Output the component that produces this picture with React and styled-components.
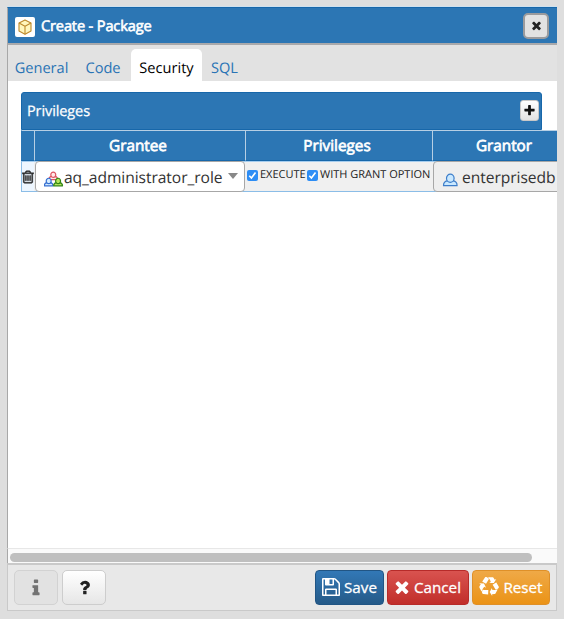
import React from 'react';
import styled, { createGlobalStyle } from 'styled-components';

const GlobalStyle = createGlobalStyle`
  * { box-sizing: border-box; }
  html, body { margin: 0; padding: 0; background: #dedede; overflow: hidden; }
  body { font-family: "Open Sans", "Noto Sans", sans-serif; color: #222; text-rendering: geometricPrecision; }
  svg { display: block; flex: none; }
`;

const Page = styled.div`
  width: 564px;
  height: 619px;
  padding: 6px 7px 8px 7px;
  background: #dedede;
`;
const Dialog = styled.div`
  width: 550px;
  height: 605px;
  display: flex;
  flex-direction: column;
  border-top: 1px solid #d0e1ee;
`;
const TitleBar = styled.header`
  height: 38px;
  flex: none;
  display: flex;
  align-items: center;
  padding: 0 8px 0 7px;
  background: #2c76b4;
  border-top: 1px solid #1767aa;
  border-left: 1px solid #a8a8a8;
  border-bottom: 2px solid #a9a9ab;
`;
const PackageBadge = styled.span`
  width: 20px;
  height: 20px;
  margin-top: 3px;
  display: flex;
  align-items: center;
  justify-content: center;
  background: #fff;
  border-radius: 2px;
`;
const Title = styled.h1`
  margin: 0 auto 0 6px;
  color: #fff;
  font-size: 14.6px;
  font-weight: 400;
  letter-spacing: -0.15px;
  -webkit-text-stroke: 0.6px #fff;
  line-height: 22px;
  white-space: nowrap;
`;
const CloseButton = styled.button`
  width: 26px;
  height: 26px;
  padding: 0;
  display: flex;
  align-items: center;
  justify-content: center;
  color: #222;
  background: #e2e2e2;
  border: 2px solid #9b9b9d;
  border-radius: 5px;
`;
const Tabs = styled.nav`
  height: 36px;
  flex: none;
  display: flex;
  align-items: flex-end;
  background: #e2e2e2;
  border-left: 1px solid #a8a8a8;
`;
const Tab = styled.a`
  width: ${p => p.$w}px;
  height: 32px;
  padding-top: 7px;
  text-align: center;
  font-size: 14.6px;
  line-height: 24px;
  color: ${p => (p.$active ? '#000' : '#2a74b5')};
  background: ${p => (p.$active ? '#fff' : 'transparent')};
  border-radius: 5px 5px 0 0;
`;
const Body = styled.main`
  flex: 1;
  padding: 11px 0 0 13px;
  background: #fff;
  border-left: 1px solid #a8a8a8;
  overflow: hidden;
`;
const PanelHeader = styled.div`
  width: 521px;
  height: 38px;
  padding: 1px 2px 0 5px;
  display: flex;
  align-items: center;
  justify-content: space-between;
  color: #fff;
  background: #2c76b4;
  border: 1px solid #1767aa;
  border-radius: 3px 3px 0 0;
  font-size: 14.5px;
  letter-spacing: -0.1px;
  -webkit-text-stroke: 0.25px #fff;
  line-height: 20px;
`;
const AddButton = styled.button`
  width: 19px;
  height: 21px;
  margin-bottom: 3px;
  padding: 0;
  display: flex;
  align-items: center;
  justify-content: center;
  color: #111;
  background: linear-gradient(#fff, #e2e2e2);
  border: 1px solid #c8c8c8;
  border-radius: 3px;
`;
const Grid = styled.div`
  width: 574px;
  display: grid;
  grid-template-columns: 13px 211px 187px 163px;
`;
const HeadCell = styled.div`
  height: 31px;
  padding: ${p => p.$pad || '5px 0 0'};
  text-align: center;
  color: #fff;
  background: #2c76b4;
  border-top: 1px solid #b7cfe4;
  border-left: 1px solid ${p => (p.$first ? '#2c76b4' : '#b7cfe4')};
  border-bottom: 1px solid #1767aa;
  font-size: 15.3px;
  -webkit-text-stroke: 0.7px #fff;
  line-height: 21px;
`;
const Cell = styled.div`
  height: 31px;
  display: flex;
  align-items: center;
  background: ${p => p.$bg || '#f0f0f0'};
  border-top: 1px solid #a6cdee;
  border-bottom: 1px solid #8bbde7;
  border-left: ${p => (p.$first ? '1px solid #8bbde7' : '0')};
`;
const SelectBox = styled.div`
  width: ${p => p.$w}px;
  height: 31px;
  margin: -1px 0 -1px 1px;
  padding: 2px 6px 0 8px;
  display: flex;
  align-items: center;
  background: ${p => p.$bg};
  border: 1px solid #a7a7a7;
  border-radius: 4px;
  font-size: 15.6px;
  line-height: 24px;
  color: #333;
  white-space: nowrap;
  svg { margin-top: 3px; }
`;
const SelectText = styled.span`
  margin: 0 auto 1px ${p => p.$gap || 0}px;
  letter-spacing: -0.06px;
`;
const Caret = styled.span`
  border: 5px solid transparent;
  border-top: 6px solid #888;
  border-bottom: 0;
  margin-bottom: 3px;
`;
const CheckLabel = styled.span`
  width: ${p => p.$w}px;
  height: 20px;
  margin-bottom: 4px;
  display: flex;
  align-items: center;
  gap: 2px;
  font-size: 11px;
  color: #222;
  white-space: nowrap;
`;
const CheckMark = styled.span`
  width: 11px;
  height: 11px;
  margin-top: 1px;
  flex: none;
  display: flex;
  align-items: center;
  justify-content: center;
  background: #2d8df5;
  border-radius: 2px;
`;
const CheckCell = styled(Cell)`
  padding-left: 2px;
`;
const ScrollTrack = styled.div`
  height: 15px;
  flex: none;
  padding: 4px 0 0 2px;
  background: #fafafa;
  border-top: 1px solid #e7e7e7;
  border-left: 1px solid #a8a8a8;
`;
const ScrollThumb = styled.div`
  width: 522px;
  height: 9px;
  background: #bfbfbf;
  border-radius: 5px;
`;
const Footer = styled.footer`
  width: 550px;
  height: 48px;
  flex: none;
  padding: 0 6px 0 6px;
  display: flex;
  align-items: center;
  gap: 3px;
  background: #e8e8e8;
  border: 1px solid #c9c9c9;
  border-top-width: 2px;
`;
const IconButton = styled.button`
  width: 44px;
  height: 35px;
  padding: 0;
  margin-right: ${p => (p.$last ? 'auto' : '0')};
  display: flex;
  align-items: center;
  justify-content: center;
  color: ${p => (p.$disabled ? '#737373' : '#222')};
  background: ${p => (p.$disabled ? '#e2e2e2' : 'linear-gradient(#fff, #e6e6e6)')};
  border: 1px solid ${p => (p.$disabled ? '#d2d2d2' : '#cdcdcd')};
  border-radius: 5px;
`;
const FirstIconButton = styled(IconButton)`
  margin-right: 1px;
`;
const tones = {
  save: ['#3278b6', '#255a88', '#215584'],
  cancel: ['#d9534f', '#c12e2a', '#b72b29'],
  reset: ['#efa947', '#eb9316', '#df9028'],
};
const ActionButton = styled.button`
  width: ${p => p.$w}px;
  height: 35px;
  padding: 0 0 1px;
  display: flex;
  align-items: center;
  justify-content: center;
  gap: ${p => p.$gap}px;
  color: #fff;
  background: linear-gradient(${p => tones[p.$tone][0]}, ${p => tones[p.$tone][1]});
  border: 1px solid ${p => tones[p.$tone][2]};
  border-radius: 4px;
  font: 400 15.2px/22px "Open Sans", "Noto Sans", sans-serif;
  -webkit-text-stroke: 0.3px #fff;
`;

const glyphs = {
  times: 'M1490 1322q0 40-28 68l-136 136q-28 28-68 28t-68-28l-294-294-294 294q-28 28-68 28t-68-28l-136-136q-28-28-28-68t28-68l294-294-294-294q-28-28-28-68t28-68l136-136q28-28 68-28t68 28l294 294 294-294q28-28 68-28t68 28l136 136q28 28 28 68t-28 68l-294 294 294 294q28 28 28 68z',
  plus: 'M1600 736v192q0 40-28 68t-68 28h-416v416q0 40-28 68t-68 28h-192q-40 0-68-28t-28-68v-416h-416q-40 0-68-28t-28-68v-192q0-40 28-68t68-28h416v-416q0-40 28-68t68-28h192q40 0 68 28t28 68v416h416q40 0 68 28t28 68z',
  trash: 'M704 736v576q0 14-9 23t-23 9h-64q-14 0-23-9t-9-23v-576q0-14 9-23t23-9h64q14 0 23 9t9 23zm256 0v576q0 14-9 23t-23 9h-64q-14 0-23-9t-9-23v-576q0-14 9-23t23-9h64q14 0 23 9t9 23zm256 0v576q0 14-9 23t-23 9h-64q-14 0-23-9t-9-23v-576q0-14 9-23t23-9h64q14 0 23 9t9 23zm128 724v-948h-896v948q0 22 7 40.5t14.5 27 10.5 8.5h832q3 0 10.5-8.5t14.5-27 7-40.5zm-672-1076h448l-48-117q-7-9-17-11h-317q-10 2-17 11zm928 32v64q0 14-9 23t-23 9h-96v948q0 83-47 143.5t-113 60.5h-832q-66 0-113-58.5t-47-141.5v-952h-96q-14 0-23-9t-9-23v-64q0-14 9-23t23-9h309l70-167q15-37 54-63t79-26h320q40 0 79 26t54 63l70 167h309q14 0 23 9t9 23z',
  save: 'M512 1536h768v-384h-768v384zm896 0h128v-896q0-14-10-38.5t-20-34.5l-281-281q-10-10-34-20t-39-10v416q0 40-28 68t-68 28h-576q-40 0-68-28t-28-68v-416h-128v1280h128v-416q0-40 28-68t68-28h832q40 0 68 28t28 68v416zm-384-928v-320q0-13-9.5-22.5t-22.5-9.5h-192q-13 0-22.5 9.5t-9.5 22.5v320q0 13 9.5 22.5t22.5 9.5h192q13 0 22.5-9.5t9.5-22.5zm640 32v928q0 40-28 68t-68 28h-1344q-40 0-68-28t-28-68v-1344q0-40 28-68t68-28h928q40 0 88 20t76 48l280 280q28 28 48 76t20 88z',
  info: 'M1216 1344v128q0 26-19 45t-45 19h-512q-26 0-45-19t-19-45v-128q0-26 19-45t45-19h64v-384h-64q-26 0-45-19t-19-45v-128q0-26 19-45t45-19h384q26 0 45 19t19 45v576h64q26 0 45 19t19 45zm-128-1152v192q0 26-19 45t-45 19h-256q-26 0-45-19t-19-45v-192q0-26 19-45t45-19h256q26 0 45 19t19 45z',
  question: 'M1088 1256v240q0 16-12 28t-28 12h-240q-16 0-28-12t-12-28v-240q0-16 12-28t28-12h240q16 0 28 12t12 28zm316-600q0 54-15.5 101t-35 76.5-55 59.5-57.5 43.5-61 35.5q-41 23-68.5 65t-27.5 67q0 17-12 32.5t-28 15.5h-240q-15 0-25.5-18.5t-10.5-37.5v-45q0-83 65-156.5t143-108.5q59-27 84-56t25-76q0-42-46.5-74t-107.5-32q-65 0-108 29-35 25-107 115-13 16-31 16-12 0-25-8l-164-125q-13-10-15.5-25t5.5-28q160-266 464-266 80 0 161 31t146 83 106 127.5 41 158.5z',
  recycle: 'M836 1169l-15 368-2 22-420-29q-36-3-67-31.5t-47-65.5q-11-27-14.5-55t4-65 12-55 21.5-64 19-53q78 12 509 28zm-387-586l180 379-147-92q-63 72-111.5 144.5t-72.5 125-39.5 94.5-18.5 63l-4 21-190-357q-17-26-18-56t6-47l8-18q35-63 114-188l-140-86zm1231 517l-188 359q-12 29-36.5 46.5t-43.5 20.5l-18 4q-71 7-219 12l8 164-230-367 211-362 7 173q170 16 283 5t170-33zm-785-924q-47 63-265 435l-317-187-19-12 225-356q20-31 60-45t80-10q24 2 48.5 12t42 21 41.5 33 36 34.5 36 39.5 32 35zm655 307l212 363q18 37 12.5 76t-27.5 74q-13 20-33 37t-38 28-48.5 22-47 16-51.5 14-46 12q-34-72-265-436l313-195zm-143-226l142-83-220 373-419-20 151-86q-34-89-75-166t-75.5-123.5-64.5-80-47-46.5l-17-13 405 1q31-3 58 10.5t39 28.5l11 15q39 61 112 190z',
};
const Glyph = ({ name, size, box = '0 0 1792 1792', w, weight = 0 }) => (
  <svg width={w || size} height={size} viewBox={box} fill="currentColor" stroke="currentColor" strokeWidth={weight}>
    <path d={glyphs[name]} />
  </svg>
);
const PackageIcon = () => (
  <svg width="16" height="16" viewBox="0 0 16 16" fill="#fff6bd" stroke="#bd8a2c" strokeWidth="1.1" strokeLinejoin="round">
    <path d="M8 .9 14 4v8l-6 3.2L2 12V4z" /><path d="M2 4l6 3.2L14 4M8 7.2v8" fill="none" />
  </svg>
);
const Person = ({ x = 0, y = 0, s = 1, stroke, fill }) => (
  <g transform={`translate(${x} ${y}) scale(${s})`} stroke={stroke} fill={fill} strokeWidth={1.2 / s} strokeLinejoin="round">
    <path d="M.7 12.3c0-3 1.5-4.7 4.6-5h4.4c3.1.3 4.6 2 4.6 5z" />
    <ellipse cx="7.5" cy="4.8" rx="3.8" ry="4.1" />
  </g>
);
const RoleIcon = () => (
  <svg width="20" height="16" viewBox="0 0 20 16">
    <Person x={4.4} y={0.6} s={0.65} stroke="#dc5561" fill="#ffe9e9" />
    <Person x={-0.2} y={6.8} s={0.65} stroke="#346ed0" fill="#d3ebff" />
    <Person x={9.2} y={6.8} s={0.65} stroke="#318516" fill="#b7e65c" />
  </svg>
);
const UserIcon = () => (
  <svg width="17" height="15" viewBox="0 0 17 15"><Person x={0.8} y={1.4} stroke="#3d7dc9" fill="#c9e8ff" /></svg>
);
const Check = () => (
  <CheckMark><svg width="9" height="9" viewBox="0 0 9 9" fill="none" stroke="#fff" strokeWidth="1.6"><path d="M1.3 4.8 3.4 7 7.5 1.6" /></svg></CheckMark>
);

export default function App() {
  return (
    <Page>
      <GlobalStyle />
      <Dialog>
        <TitleBar>
          <PackageBadge><PackageIcon /></PackageBadge>
          <Title>Create - Package</Title>
          <CloseButton aria-label="Close"><Glyph name="times" size={13} /></CloseButton>
        </TitleBar>
        <Tabs>
          <Tab $w={67}>General</Tab>
          <Tab $w={56}>Code</Tab>
          <Tab $w={71} $active>Security</Tab>
          <Tab $w={45}>SQL</Tab>
        </Tabs>
        <Body>
          <PanelHeader>
            Privileges
            <AddButton aria-label="Add"><Glyph name="plus" size={13} /></AddButton>
          </PanelHeader>
          <Grid>
            <HeadCell $first />
            <HeadCell $pad="5px 4px 0 0">Grantee</HeadCell>
            <HeadCell $pad="5px 4px 0 0">Privileges</HeadCell>
            <HeadCell $pad="5px 20px 0 0">Grantor</HeadCell>
            <Cell $first $bg="#edf6ff"><Glyph name="trash" size={14} w={12} weight={50} box="170 100 1452 1590" /></Cell>
            <Cell>
              <SelectBox $w={210} $bg="#fff">
                <RoleIcon /><SelectText>aq_administrator_role</SelectText><Caret />
              </SelectBox>
            </Cell>
            <CheckCell>
              <CheckLabel $w={60}><Check />EXECUTE</CheckLabel>
              <CheckLabel $w={125}><Check />WITH GRANT OPTION</CheckLabel>
            </CheckCell>
            <Cell>
              <SelectBox $w={162} $bg="#eee">
                <UserIcon /><SelectText $gap={3}>enterprisedb</SelectText>
              </SelectBox>
            </Cell>
          </Grid>
        </Body>
        <ScrollTrack><ScrollThumb /></ScrollTrack>
        <Footer>
          <FirstIconButton $disabled aria-label="Information"><Glyph name="info" size={20} /></FirstIconButton>
          <IconButton $last aria-label="Help"><Glyph name="question" size={19} /></IconButton>
          <ActionButton $tone="save" $w={69} $gap={4}><Glyph name="save" size={18} box="128 128 1536 1536" />Save</ActionButton>
          <ActionButton $tone="cancel" $w={82} $gap={5}><Glyph name="times" size={14} box="302 238 1188 1316" />Cancel</ActionButton>
          <ActionButton $tone="reset" $w={78} $gap={4}><Glyph name="recycle" size={20} />Reset</ActionButton>
        </Footer>
      </Dialog>
    </Page>
  );
}
